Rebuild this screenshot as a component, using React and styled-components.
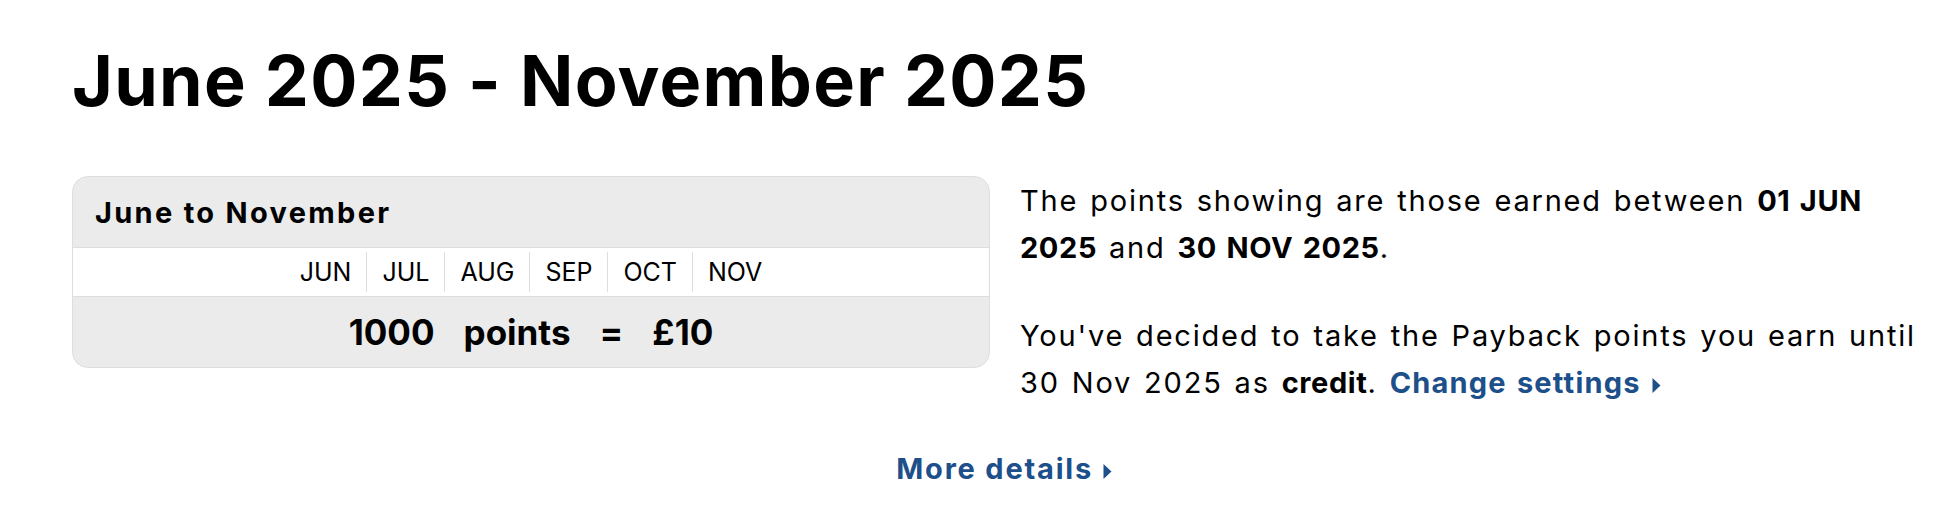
import React from "react";
import styled, { createGlobalStyle } from "styled-components";

const GlobalStyle = createGlobalStyle`
  body {
    margin: 0;
    background: #fff;
    color: #000;
    font-family: Inter, "Liberation Sans", sans-serif;
  }
`;

const months = ["JUN", "JUL", "AUG", "SEP", "OCT", "NOV"];

const Arrow = () => (
  <svg width="9" height="17" viewBox="0 0 9 17">
    <polygon points="0.5,1 8.5,8.5 0.5,16" fill="currentColor" />
  </svg>
);

const App = () => {
  return (
    <Page>
      <GlobalStyle />
      <Title>June 2025 - November 2025</Title>
      <Columns>
        <Card>
          <CardHeader>June to November</CardHeader>
          <MonthRow>
            {months.map((m, i) => (
              <Month key={m} first={i === 0}>
                {m}
              </Month>
            ))}
          </MonthRow>
          <PointsRow>
            <span>1000</span>
            <span>points</span>
            <span>=</span>
            <span>£10</span>
          </PointsRow>
        </Card>
        <Info>
          <p>
            The points showing are those earned between <b>01 JUN 2025</b> and{" "}
            <b>30 NOV 2025</b>.
          </p>
          <p>
            You've decided to take the Payback points you earn until 30 Nov
            2025 as <b>credit</b>.{" "}
            <Link href="#">
              Change settings <Arrow />
            </Link>
          </p>
        </Info>
      </Columns>
      <More>
        <Link href="#">
          More details <Arrow />
        </Link>
      </More>
    </Page>
  );
};

const Page = styled.div`
  padding: 46px 20px 0 72px;
`;

const Title = styled.h1`
  margin: 0;
  font-size: 70px;
  line-height: 70px;
  font-weight: 700;
  letter-spacing: 1.3px;
`;

const Columns = styled.div`
  display: grid;
  grid-template-columns: 918px 1fr;
  gap: 30px;
  margin-top: 60px;
  align-items: start;
`;

const Card = styled.div`
  background: #ebebeb;
  border: 1px solid #dedede;
  border-radius: 16px;
  overflow: hidden;
`;

const CardHeader = styled.div`
  height: 70px;
  display: flex;
  align-items: center;
  padding: 0 22px;
  font-size: 29px;
  font-weight: 700;
  letter-spacing: 2.3px;
`;

const MonthRow = styled.div`
  display: flex;
  justify-content: center;
  align-items: center;
  height: 48px;
  background: #fff;
  border-top: 1px solid #dedede;
  border-bottom: 1px solid #dedede;
`;

const Month = styled.div`
  padding: 0 15px;
  font-size: 25px;
  line-height: 40px;
  border-left: ${(p) => (p.first ? "none" : "1px solid #dedede")};
`;

const PointsRow = styled.div`
  height: 70px;
  display: flex;
  justify-content: center;
  align-items: center;
  gap: 29px;
  font-size: 35px;
  font-weight: 700;
`;

const Info = styled.div`
  padding-top: 1px;
  font-size: 29px;
  line-height: 47px;
  letter-spacing: 1.8px;
  word-spacing: 2px;
  p {
    margin: 0 0 41px;
  }
  p:last-child {
    margin-bottom: 0;
  }
  b {
    font-weight: 700;
    letter-spacing: 0.6px;
  }
`;

const Link = styled.a`
  color: #1d4f8a;
  font-weight: 700;
  text-decoration: none;
  white-space: nowrap;
  letter-spacing: 1.2px;
  svg {
    margin-left: 1px;
    vertical-align: -1px;
  }
`;

const More = styled.div`
  margin-top: 39px;
  text-align: center;
  font-size: 29px;
  line-height: 47px;
  letter-spacing: 1.8px;
  a {
    letter-spacing: 1.8px;
  }
`;

export default App;
